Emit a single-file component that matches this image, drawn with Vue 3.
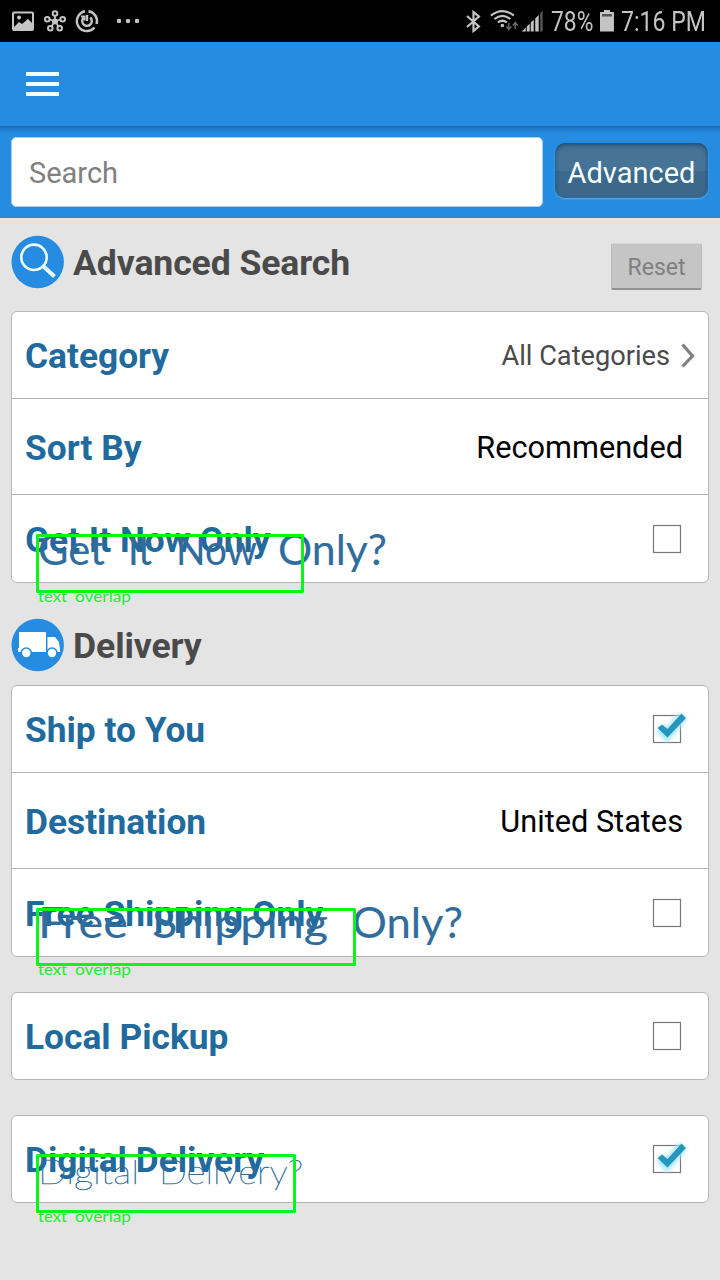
<script setup>
const searchRows = [
  { label: 'Category', value: 'All Categories', kind: 'link' },
  { label: 'Sort By', value: 'Recommended', kind: 'select' },
  { label: 'Get It Now Only', kind: 'check', checked: false },
]
const deliveryRows = [
  { label: 'Ship to You', kind: 'check', checked: true },
  { label: 'Destination', value: 'United States', kind: 'select' },
  { label: 'Free Shipping Only', kind: 'check', checked: false },
]
const groups = [
  { id: 'basic', title: 'Advanced Search', cards: [searchRows] },
  {
    id: 'delivery',
    title: 'Delivery',
    cards: [
      deliveryRows,
      [{ label: 'Local Pickup', kind: 'check', checked: false }],
      [{ label: 'Digital Delivery', kind: 'check', checked: true }],
    ],
  },
]
const notes = [
  {
    box: [37.5, 535.5, 265, 56], size: 42, weight: 400, stroke: 0.1, base: 565, tag: 602,
    words: [['Get', 38, 67], ['It', 128, 24], ['Now', 176, 81], ['Only?', 278, 109]],
  },
  {
    box: [37.5, 909.5, 317, 55], size: 42, weight: 400, stroke: 0.1, base: 938, tag: 975,
    words: [['Free', 38, 90], ['Shipping', 152, 176], ['Only?', 352, 111]],
  },
  {
    box: [37.5, 1155.5, 257, 56], size: 33, weight: 100, stroke: 0.5, base: 1184, tag: 1222,
    words: [['Digital', 38, 101], ['Delivery?', 159, 144]],
  },
]
</script>

<template>
  <div class="screen">
    <header class="status">
      <svg class="left-icons" width="150" height="42" viewBox="0 0 150 42">
        <g fill="none" stroke="#c4c4c4" stroke-width="2">
          <rect x="13" y="12.500" width="20" height="17.500" rx="1" />
          <path stroke-width="1.800" d="M55 21V15.500M55 21L49.500 19.500M55 21L60.500 19.500M55 21L51.500 26.500M55 21L58.500 26.500" />
          <circle cx="55" cy="21.500" r="2" />
          <circle cx="55" cy="13.500" r="2.300" /><circle cx="47.300" cy="19.300" r="2.300" />
          <circle cx="62.700" cy="19.300" r="2.300" /><circle cx="50.300" cy="28.300" r="2.300" />
          <circle cx="59.700" cy="28.300" r="2.300" />
          <path stroke-width="2.400" d="M85 11.200A10 10 0 1 0 94.500 27.500M96.600 24A10 10 0 0 0 88.500 11.200" />
          <path stroke-width="2.400" d="M83.800 17.500A4.800 4.800 0 1 0 90.200 17.500M87 15V21" />
          <path d="M81 16.500H84.500V20.500" />
        </g>
        <path fill="#c4c4c4" d="M14 27L19 22L22 24L28 19L33 24V29H14Z" />
        <circle cx="19" cy="17.500" r="2" fill="#c4c4c4" />
        <g fill="#c4c4c4">
          <rect x="117" y="19" width="4" height="4" rx="1" />
          <rect x="126" y="19" width="4" height="4" rx="1" />
          <rect x="135" y="19" width="4" height="4" rx="1" />
        </g>
      </svg>
      <div class="right-status">
        <svg width="80" height="42" viewBox="464 0 80 42">
          <path d="M467 16L479 26.500L473.500 31V12L479 16.500L467 27" fill="none" stroke="#c4c4c4" stroke-width="2.200" />
          <g fill="none" stroke="#c4c4c4" stroke-width="2.200">
            <path d="M491 15.500Q502.500 6.500 514 15.500" />
            <path d="M494.500 19Q502.500 12.500 510.500 19" />
            <path d="M498 22.500Q502.500 19 507 22.500" />
          </g>
          <circle cx="502.500" cy="25.500" r="1.800" fill="#c4c4c4" />
          <path d="M509 23V29M506.500 26.500L509 29.500L511.500 26.500M515.500 29V23M513 25.500L515.500 22.500L518 25.500" fill="none" stroke="#666" stroke-width="1.500" />
          <g fill="#c4c4c4">
            <path d="M522 31.500L526 27.500V31.500Z" />
            <path d="M527 31.500V26.500L530 23.700V31.500Z" />
            <path d="M531 31.500V22.500L534 19.700V31.500Z" />
            <path d="M535.500 31.500V18.500L539 15V31.500Z" />
          </g>
          <path d="M540.500 31.500V13L543 10.500V31.500Z" fill="#555" />
        </svg>
        <span class="percent">78%</span>
        <svg width="14" height="42" viewBox="0 0 14 42">
          <path d="M0 12H4V10H10V12H14V31.500H0Z" fill="#c4c4c4" />
          <rect x="2" y="14" width="10" height="2.500" fill="#555" />
        </svg>
        <span class="clock">7:16 PM</span>
      </div>
    </header>

    <nav class="bar"><i></i><i></i><i></i></nav>

    <div class="search">
      <div class="field"><span>Search</span></div>
      <div class="advanced"><span>Advanced</span></div>
    </div>

    <section v-for="g in groups" :key="g.id" :class="g.id">
      <div class="heading">
        <svg v-if="g.id === 'basic'" width="54" height="54" viewBox="0 0 54 54">
          <circle cx="26.700" cy="27" r="26.200" fill="#258ce1" />
          <circle cx="23" cy="22.300" r="12.700" fill="none" stroke="#f0ffff" stroke-width="2.600" />
          <path d="M32 31L43.500 41.500" stroke="#f0ffff" stroke-width="4" />
        </svg>
        <svg v-else width="54" height="54" viewBox="0 0 54 54">
          <circle cx="26.700" cy="27" r="26.200" fill="#258ce1" />
          <path d="M9 14H34Q35 14 35 15V34H7V30H8V15Q8 14 9 14ZM36.500 19H44L48 24L49.300 34H36.500Z" fill="#fff" />
          <g fill="#fff" stroke="#258ce1" stroke-width="1.600">
            <circle cx="15.300" cy="35" r="5" /><circle cx="41" cy="35" r="5" />
          </g>
        </svg>
        <h2>{{ g.title }}</h2>
        <div v-if="g.id === 'basic'" class="reset"><span>Reset</span></div>
      </div>
      <div v-for="(card, c) in g.cards" :key="c" class="card">
        <div v-for="row in card" :key="row.label" class="row" :class="row.kind">
          <span class="label">{{ row.label }}</span>
          <span v-if="row.value" class="value">{{ row.value }}</span>
          <svg v-if="row.kind === 'link'" class="chevron" width="14" height="26" viewBox="0 0 14 26">
            <path d="M1.500 1.500L11.500 13L1.500 23.500" fill="none" stroke="#808080" stroke-width="3.200" />
          </svg>
          <svg v-if="row.kind === 'check'" class="box" width="40" height="36" viewBox="0 0 40 36">
            <rect x="3.500" y="4.500" width="27" height="27" fill="#fff" stroke="#777" stroke-width="1.200" />
            <g v-if="row.checked">
              <path class="glow" d="M10 17L17 24L33 5" fill="none" stroke="#a5e6fb" stroke-width="10" />
              <path d="M7.500 17L12 13.500L17.500 18L31.500 2.500L36 7L17.500 26.500Z" fill="#2596bd" />
            </g>
          </svg>
        </div>
      </div>
    </section>

    <svg class="notes" width="720" height="1280" viewBox="0 0 720 1280">
      <g v-for="n in notes" :key="n.base">
        <text v-for="w in n.words" :key="w[0]" :x="w[1]" :y="n.base" :textLength="w[2]" :font-size="n.size"
          :font-weight="n.weight" :stroke-width="n.stroke" lengthAdjust="spacingAndGlyphs" fill="#316d9c"
          stroke="#316d9c">{{ w[0] }}</text>
        <rect :x="n.box[0]" :y="n.box[1]" :width="n.box[2]" :height="n.box[3]" fill="none" stroke="#0cf51a"
          stroke-width="3" stroke-linejoin="round" />
        <text x="38" :y="n.tag" textLength="29" lengthAdjust="spacingAndGlyphs" class="tag">text</text>
        <text x="75" :y="n.tag" textLength="56" lengthAdjust="spacingAndGlyphs" class="tag">overlap</text>
      </g>
    </svg>
  </div>
</template>

<style>
body { margin: 0; background: #e4e4e4; }
</style>
<style scoped>
* { box-sizing: border-box; }
.screen { position: relative; width: 720px; height: 1280px; overflow: hidden; background: #e4e4e4; font-family: Roboto, "Liberation Sans", sans-serif; }
.status { height: 42px; background: #000; display: flex; justify-content: space-between; color: #c4c4c4; font-size: 27px; line-height: 45px; }
.right-status { display: flex; width: 256px; white-space: nowrap; }
.percent { width: 56px; padding-left: 7px; transform: scaleX(.845); transform-origin: 7px 0; }
.clock { padding-left: 7px; transform: scaleX(.855); transform-origin: 7px 0; }
.bar { height: 84px; background: #258ce1; padding: 30px 26px; display: flex; flex-direction: column; gap: 6px; }
.bar i { display: block; width: 33px; height: 4px; background: #f0ffff; }
.search { height: 92px; padding: 11px 12px 11px 11px; display: flex; gap: 12px; background: linear-gradient(#1769aa 0, #1c78c3 2px, #258ce1 7px); }
.field { width: 532px; height: 70px; border-radius: 5px; background: #fff; border: 1px solid #a9cfee; padding-left: 17px; font-size: 29px; line-height: 70px; color: #808080; }
.advanced { margin-top: 6px; width: 153px; height: 55px; border-radius: 10px; background: linear-gradient(#467396 50%, #3b688b 50%); box-shadow: inset 0 2px 4px #1e4c75, inset 0 0 3px #3b74a5, 0 1px 2px #65b0ee; color: #f4ffff; font-size: 29px; line-height: 61px; text-align: center; }
.heading { display: flex; align-items: center; padding-left: 11px; }
.basic .heading { height: 93px; padding-bottom: 6px; }
.delivery .heading { height: 102px; padding-top: 21px; }
h2 { margin: 2px 0 0 8px; flex: 1; font-size: 35.600px; line-height: 42px; font-weight: 700; color: #4a4a4a; letter-spacing: -.1px; }
.reset { margin: 10px 18px 0 0; width: 91px; height: 47px; background: #c5c5c5; border: 1px solid #bbb; border-top-color: #d5d5d5; border-bottom: 2px solid #929292; border-radius: 2px; color: #808080; font-size: 23px; line-height: 47px; text-align: center; }
.card { margin: 0 11px 35px; width: 698px; background: #fff; border: 1px solid #b5b5b5; border-radius: 6px; }
.basic .card { margin-bottom: 0; }
.row { height: 87px; display: flex; align-items: center; justify-content: space-between; padding: 2px 25px 0 13px; border-bottom: 1px solid #b5b5b5; }
.row.select { height: 96px; }
.row:last-child { border-bottom: 0; height: 87px; }
.card:has(.row:only-child) .row { height: 86px; }
.label { font-size: 35.300px; font-weight: 700; color: #216a9d; white-space: nowrap; }
.value { font-size: 30.700px; color: #000; }
.link .value { margin-left: auto; font-size: 27.200px; color: #4a4a4a; }
.link { padding-right: 13px; }
.chevron { margin-left: 11px; }
.check { padding-right: 18px; }
.box { margin-top: -2px; }
.glow { filter: blur(2px); }
.notes { position: absolute; inset: 0; font-family: Lato, sans-serif; }
.tag { font-size: 15px; font-weight: 400; fill: #20ee2b; }
</style>
